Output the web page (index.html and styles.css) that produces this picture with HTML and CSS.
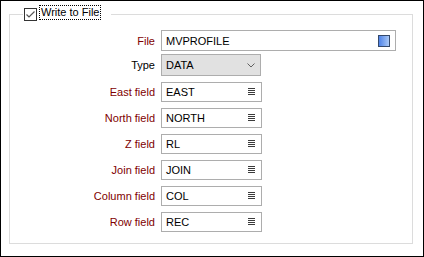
FILE: index.html
```html
<!DOCTYPE html>
<html>
<head>
    <meta charset="utf-8" />
    <link rel="stylesheet" href="styles.css">
</head>
<body>
    <div class="frame">
        <fieldset class="group">
            <legend class="group-title">
                <span class="check">
                    <svg width="11" height="11" viewBox="0 0 11 11"><polyline points="1.5,5.5 4,8 9.5,2.5" fill="none" stroke="#555" stroke-width="1.2" /></svg>
                </span>
                <span class="check-label">Write to File</span>
            </legend>
            <div class="form">
                <div class="row row-file">
                    <span class="lbl">File</span>
                    <div class="box box-file">
                        <span class="val">MVPROFILE</span>
                        <span class="browse"></span>
                    </div>
                </div>
                <div class="row row-type">
                    <span class="lbl lbl-plain">Type</span>
                    <div class="box box-combo">
                        <span class="val">DATA</span>
                        <svg width="8" height="5" viewBox="0 0 8 5"><polyline points="0.5,0.5 4,4 7.5,0.5" fill="none" stroke="#606060" stroke-width="1" /></svg>
                    </div>
                </div>
                <div class="row">
                    <span class="lbl">East field</span>
                    <div class="box box-field"><span class="val">EAST</span><span class="list"><i></i><i></i><i></i><i></i></span></div>
                </div>
                <div class="row">
                    <span class="lbl">North field</span>
                    <div class="box box-field"><span class="val">NORTH</span><span class="list"><i></i><i></i><i></i><i></i></span></div>
                </div>
                <div class="row">
                    <span class="lbl">Z field</span>
                    <div class="box box-field"><span class="val">RL</span><span class="list"><i></i><i></i><i></i><i></i></span></div>
                </div>
                <div class="row">
                    <span class="lbl">Join field</span>
                    <div class="box box-field"><span class="val">JOIN</span><span class="list"><i></i><i></i><i></i><i></i></span></div>
                </div>
                <div class="row">
                    <span class="lbl">Column field</span>
                    <div class="box box-field"><span class="val">COL</span><span class="list"><i></i><i></i><i></i><i></i></span></div>
                </div>
                <div class="row">
                    <span class="lbl">Row field</span>
                    <div class="box box-field"><span class="val">REC</span><span class="list"><i></i><i></i><i></i><i></i></span></div>
                </div>
            </div>
        </fieldset>
    </div>
</body>
</html>
```

FILE: styles.css
```css
body {
    margin: 0;
    font-family: "Liberation Sans", Arial, sans-serif;
    font-size: 11px;
    background-color: #fff;
    color: #000;
}

.frame {
    width: 424px;
    height: 257px;
    box-sizing: border-box;
    border: 1px solid #000;
    padding: 4px 10px 0 8px;
}

.group {
    box-sizing: border-box;
    height: 239px;
    margin: 0;
    padding: 7px 0 0 0;
    border: 1px solid #dcdcdc;
}

.group-title {
    display: flex;
    align-items: flex-start;
    height: 18px;
    margin-left: 13px;
    padding: 0 10px 0 1px;
}

.check {
    display: flex;
    align-items: center;
    justify-content: center;
    width: 13px;
    height: 13px;
    box-sizing: border-box;
    margin-top: 3px;
    border: 1px solid #333;
    background-color: #fff;
}

.check-label {
    margin-left: 2px;
    padding: 0 1px;
    line-height: 13px;
    border: 1px dotted #000;
}

.form {
    display: flex;
    flex-direction: column;
}

.row {
    display: flex;
    align-items: center;
    margin-top: 6px;
}

.row-file {
    margin-top: 0;
}

.row-type {
    margin-top: 3px;
}

.lbl {
    width: 145px;
    margin-right: 6px;
    text-align: right;
    color: #800000;
}

.lbl-plain {
    color: #000;
}

.box {
    display: flex;
    align-items: center;
    box-sizing: border-box;
    border: 1px solid #adadad;
    background-color: #fff;
    padding: 0 6px 0 4px;
}

.val {
    flex: 1;
}

.box-file {
    width: 235px;
    height: 21px;
    padding-right: 5px;
}

.browse {
    width: 12px;
    height: 12px;
    box-sizing: border-box;
    border: 1px solid #34496b;
    background: linear-gradient(to right, #4f83e8, #a9c8f6);
}

.box-combo {
    width: 100px;
    height: 22px;
    background-color: #e1e1e1;
    padding-right: 5px;
}

.box-field {
    width: 101px;
    height: 20px;
}

.list {
    display: flex;
    flex-direction: column;
    width: 7px;
}

.list i {
    display: block;
    height: 1px;
    margin-bottom: 1px;
    background-color: #3c3c3c;
}
```
